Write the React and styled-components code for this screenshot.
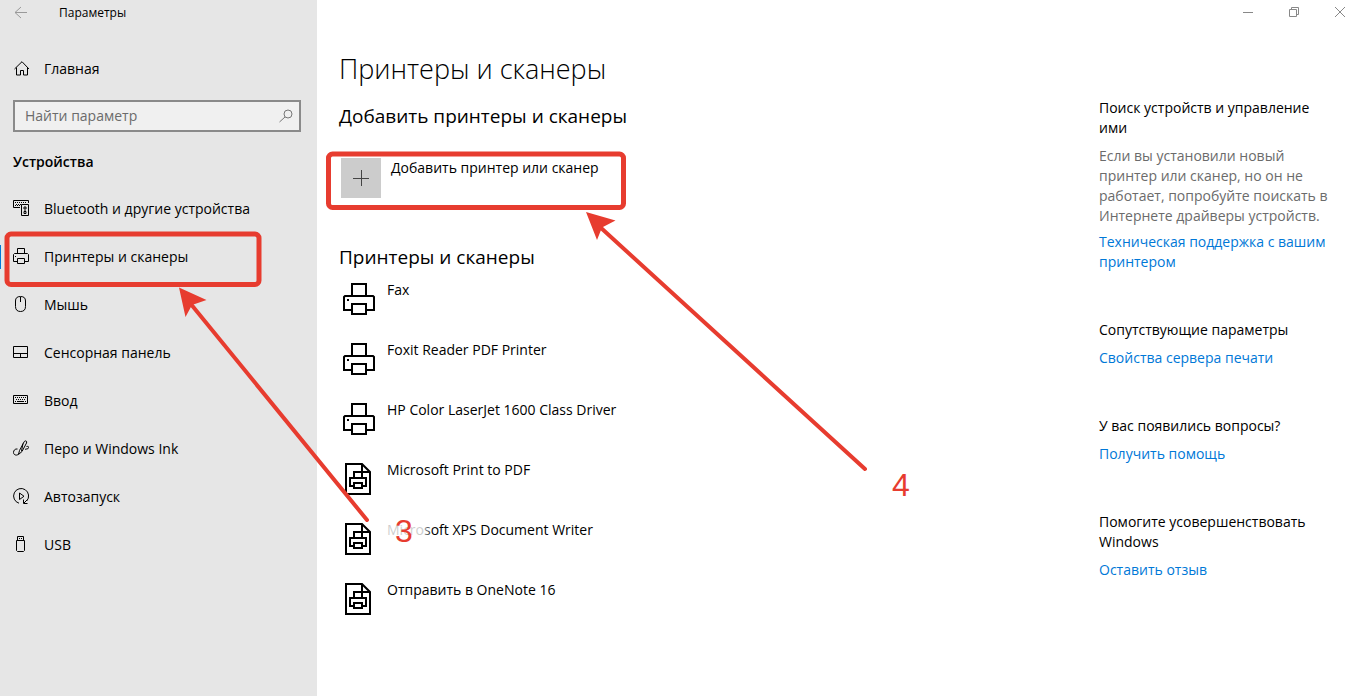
import React from "react"
import styled, { createGlobalStyle } from "styled-components"

const RED = "#e73c2f"

const Svg = ({ w = 16, h = 16, sw = 1, children }) => (
  <svg width={w} height={h} viewBox={`0 0 ${w} ${h}`} fill="none" stroke="currentColor" strokeWidth={sw} aria-hidden="true">
    {children}
  </svg>
)

const HomeIcon = () => (
  <Svg>
    <path d="M1.500 9 9 1.700 16 9M3.500 7.500v7.500h4v-4.500h3V15h4V7.500" />
  </Svg>
)

const DevicesIcon = () => (
  <Svg>
    <path d="M7 7.500H.5v-7h15V3" />
    <path d="M2 2.500h12M3 4.500h5M2 5.500h6" strokeDasharray="1 1" />
    <path d="M8.500 4.500h7v11h-7z" />
    <path d="M11 7h2v2h-2zM12 10v1M11 11.500h2v2h-2z" />
  </Svg>
)

const PrinterIcon = () => (
  <Svg>
    <path d="M4.500 5.500v-5h7v5M4.500 13.500h-4v-7l1-1h13l1 1v7h-4M4.500 10.500h7v5h-7z" />
    <path d="M2 8.500h1" />
  </Svg>
)

const MouseIcon = () => (
  <Svg>
    <path d="M7.500.5c3.500 0 5 1.500 5 4.500v5.500c0 3.500-2 5-5 5s-5-1.500-5-5V5c0-3 1.500-4.500 5-4.500zM7.500 1v5" />
  </Svg>
)

const TouchpadIcon = () => (
  <Svg>
    <path d="M.5 2.500h14v11H.5zM.5 9.500h14M7.500 9.500v4" />
  </Svg>
)

const KeyboardIcon = () => (
  <Svg>
    <path d="M.5 3.500h14v8H.5z" />
    <path d="M2 5.500h11M3 7.500h10" strokeDasharray="1 1" />
    <path d="M2 9.500h1M4 9.500h7M12 9.500h1" />
  </Svg>
)

const PenIcon = () => (
  <Svg>
    <path d="M5.500 14.500 6.500 10.500 11 2c1-2 3.500-1 2.500 1L9 11.500zM10 3.500 8.500 11M4.500 9c-2.500-.5-4 1.500-4 3.500 0 3 4.500 3.500 5 1M13.500 6.500c2-.5 2.500.5 2 1.500-.5 1.500-2.500.5-3.500 1.500" />
  </Svg>
)

const AutoplayIcon = () => (
  <Svg>
    <path d="M6 15.200A7.500 7.500 0 1 1 13.700 13M10.500 11.500v4h4M11 15l3-3" />
    <path d="M6.500 5v6.500l4.500-3.250z" />
  </Svg>
)

const UsbIcon = () => (
  <Svg>
    <path d="M4.500 4.500v-4h6v4M3.500 4.500h8v10l-1 1h-6l-1-1z" />
    <path d="M6 2.500h1M8 2.500h1" />
  </Svg>
)

const BigPrinterIcon = () => (
  <Svg w={32} h={32} sw={2}>
    <path d="M9 13V1h14v12M9 27H1V14l1-1h28l1 1v13h-8M9 21h14v10H9z" />
    <path d="M4 17h2" />
  </Svg>
)

const FilePrinterIcon = () => (
  <Svg w={32} h={32} sw={2}>
    <path d="M3 1h16l8 8v22H3zM19 1v8h8" />
    <path d="M11 15V9h8v6M11 23H7v-8h16v8h-4M11 20h8v5h-8z" />
  </Svg>
)

const navItems = [
  { label: "Bluetooth и другие устройства", icon: <DevicesIcon /> },
  { label: "Принтеры и сканеры", icon: <PrinterIcon />, active: true },
  { label: "Мышь", icon: <MouseIcon /> },
  { label: "Сенсорная панель", icon: <TouchpadIcon /> },
  { label: "Ввод", icon: <KeyboardIcon /> },
  { label: "Перо и Windows Ink", icon: <PenIcon /> },
  { label: "Автозапуск", icon: <AutoplayIcon /> },
  { label: "USB", icon: <UsbIcon /> },
]

const printers = [
  { name: "Fax", icon: <BigPrinterIcon /> },
  { name: "Foxit Reader PDF Printer", icon: <BigPrinterIcon /> },
  { name: "HP Color LaserJet 1600 Class Driver", icon: <BigPrinterIcon /> },
  { name: "Microsoft Print to PDF", icon: <FilePrinterIcon /> },
  { name: "Microsoft XPS Document Writer", icon: <FilePrinterIcon /> },
  { name: "Отправить в OneNote 16", icon: <FilePrinterIcon /> },
]

const Annotations = () => (
  <Overlay width="930" height="620" viewBox="0 0 930 620" fill="none">
    <defs>
      <linearGradient id="fade">
        <stop offset="0.8" stopColor="#fff" stopOpacity="0.8" />
        <stop offset="1" stopColor="#fff" stopOpacity="0" />
      </linearGradient>
    </defs>
    <rect x="384" y="516" width="48" height="30" fill="url(#fade)" />
    <g stroke={RED} strokeLinecap="round">
      <rect x="7" y="234" width="252" height="50.500" rx="4" strokeWidth="5" />
      <rect x="328.500" y="154" width="295" height="53.500" rx="4" strokeWidth="5" />
      <path d="M367 520 190 303M865 469 600 227" strokeWidth="4" />
    </g>
    <path d="M179 287.500 206.500 300 192 305 185.500 317zM586 212 615.500 220.500 602 227.500 597 240z" fill={RED} />
    <Step x="395" y="542">3</Step>
    <Step x="892" y="496">4</Step>
  </Overlay>
)

const App = () => (
  <Window>
    <GlobalStyle />
    <Sidebar>
      <TitleBar>
        <BackButton aria-label="Назад">
          <Svg>
            <path d="M2 7.500h12M8 2 2 7.500 8 13" />
          </Svg>
        </BackButton>
        Параметры
      </TitleBar>
      <NavLink href="#home"><HomeIcon />Главная</NavLink>
      <Search>
        <SearchInput type="text" placeholder="Найти параметр" aria-label="Найти параметр" />
        <Svg>
          <circle cx="11" cy="6" r="4" />
          <path d="M8 9l-5.500 5" />
        </Svg>
      </Search>
      <Category>Устройства</Category>
      <nav>
        {navItems.map(item => (
          <NavLink key={item.label} href="#section" $active={item.active}>
            {item.icon}{item.label}
          </NavLink>
        ))}
      </nav>
    </Sidebar>

    <Page>
      <WindowControls>
        <ControlButton aria-label="Свернуть">
          <Svg w={12} h={12}><path d="M1 6.500h10" /></Svg>
        </ControlButton>
        <ControlButton aria-label="Развернуть">
          <Svg w={12} h={12}><path d="M1.500 3.500h7v7h-7zM3.500 3.500v-2h7v7h-2" /></Svg>
        </ControlButton>
        <ControlButton aria-label="Закрыть">
          <Svg w={12} h={12}><path d="m1 1 10 10M11 1 1 11" /></Svg>
        </ControlButton>
      </WindowControls>
      <Content>
        <Main>
          <PageTitle>Принтеры и сканеры</PageTitle>
          <SectionTitle>Добавить принтеры и сканеры</SectionTitle>
          <AddButton>
            <PlusTile>
              <Svg><path d="M0 8.500h16M8.500 0v16" /></Svg>
            </PlusTile>
            Добавить принтер или сканер
          </AddButton>
          <SectionTitle>Принтеры и сканеры</SectionTitle>
          <PrinterList>
            {printers.map(printer => (
              <Printer key={printer.name}>{printer.icon}<span>{printer.name}</span></Printer>
            ))}
          </PrinterList>
        </Main>
        <Aside>
          <Block>
            <BlockTitle>Поиск устройств и управление ими</BlockTitle>
            <BlockText>
              Если вы установили новый принтер или сканер, но он не работает, попробуйте поискать в Интернете драйверы устройств.
            </BlockText>
            <BlockLink href="#support">Техническая поддержка с вашим принтером</BlockLink>
          </Block>
          <Block>
            <BlockTitle>Сопутствующие параметры</BlockTitle>
            <BlockLink href="#server">Свойства сервера печати</BlockLink>
          </Block>
          <Block>
            <BlockTitle>У вас появились вопросы?</BlockTitle>
            <BlockLink href="#help">Получить помощь</BlockLink>
          </Block>
          <Block>
            <BlockTitle>Помогите усовершенствовать Windows</BlockTitle>
            <BlockLink href="#feedback">Оставить отзыв</BlockLink>
          </Block>
        </Aside>
      </Content>
    </Page>
    <Annotations />
  </Window>
)

const GlobalStyle = createGlobalStyle`
  * {
    box-sizing: border-box;
  }
  body {
    margin: 0;
    background: #fff;
    color: #000;
    font: 14px/20px "Open Sans", "Noto Sans", sans-serif;
  }
  button {
    padding: 0;
    border: 0;
    background: none;
    color: inherit;
    font: inherit;
  }
  svg {
    flex-shrink: 0;
  }
`

const Window = styled.div`
  position: relative;
  display: flex;
  min-height: 100vh;
`

const Sidebar = styled.aside`
  width: 317px;
  flex-shrink: 0;
  background: #e6e6e6;
`

const TitleBar = styled.header`
  display: flex;
  align-items: center;
  gap: 30px;
  height: 25px;
  margin-bottom: 20px;
  padding-left: 13px;
  font-size: 12px;
`

const BackButton = styled.button`
  display: flex;
  color: #999;
`

const NavLink = styled.a`
  display: flex;
  align-items: center;
  gap: 15px;
  height: 48px;
  padding-left: 13px;
  color: #000;
  text-decoration: none;
  background: ${props => props.$active ? "linear-gradient(#0078d7, #0078d7) left center / 1px 24px no-repeat" : "none"};

  svg {
    margin-bottom: 2px;
  }
`

const Search = styled.label`
  display: flex;
  align-items: center;
  height: 32px;
  margin: 7px 16px 0 13px;
  padding: 0 6px 0 10px;
  border: 2px solid #8a8a8a;
  background: #f0f0f0;
  color: #777;
`

const SearchInput = styled.input`
  flex: 1;
  min-width: 0;
  padding: 0;
  border: 0;
  outline: 0;
  background: none;
  font: inherit;

  &::placeholder {
    color: #6b6b6b;
    opacity: 1;
  }
`

const Category = styled.h2`
  margin: 20px 13px 13px;
  font-size: 14px;
  font-weight: 600;
`

const Page = styled.div`
  display: flex;
  flex: 1;
  flex-direction: column;
  min-width: 0;
`

const WindowControls = styled.div`
  display: flex;
  justify-content: flex-end;
  gap: 34px;
  height: 24px;
  padding-right: 4px;
  color: #888;
`

const ControlButton = styled.button`
  display: flex;
  align-items: center;
`

const Content = styled.div`
  display: flex;
  flex: 1;
  padding-left: 22px;
`

const Main = styled.main`
  flex: 1;
  padding-top: 25px;
`

const PageTitle = styled.h1`
  margin: 0 0 9px;
  font-size: 27px;
  font-weight: 300;
  line-height: 40px;
`

const SectionTitle = styled.h2`
  margin: 0;
  font-size: 19px;
  font-weight: 400;
  line-height: 36px;
`

const AddButton = styled.button`
  display: flex;
  gap: 10px;
  margin: 24px 0 41px 2px;
`

const PlusTile = styled.span`
  display: grid;
  place-items: center;
  width: 40px;
  height: 40px;
  background: #ccc;
  color: #444;
`

const PrinterList = styled.ul`
  margin: 0;
  padding: 5px 0 0 4px;
  list-style: none;
`

const Printer = styled.li`
  display: flex;
  gap: 12px;
  height: 60px;

  svg {
    margin-top: 3px;
  }
`

const Aside = styled.aside`
  width: 251px;
  flex-shrink: 0;
  padding: 74px 16px 0 0;
`

const Block = styled.section`
  margin-bottom: 48px;
`

const BlockTitle = styled.h3`
  margin: 0 0 8px;
  font-size: 14px;
  font-weight: 400;
`

const BlockText = styled.p`
  margin: 0 0 6px;
  color: #6b6b6b;
`

const BlockLink = styled.a`
  display: block;
  color: #0078d7;
  text-decoration: none;
`

const Overlay = styled.svg`
  position: absolute;
  top: 0;
  left: 0;
  pointer-events: none;
`

const Step = styled.text`
  fill: ${RED};
  font: 32px "Liberation Sans", Arial, sans-serif;
`

export default App
